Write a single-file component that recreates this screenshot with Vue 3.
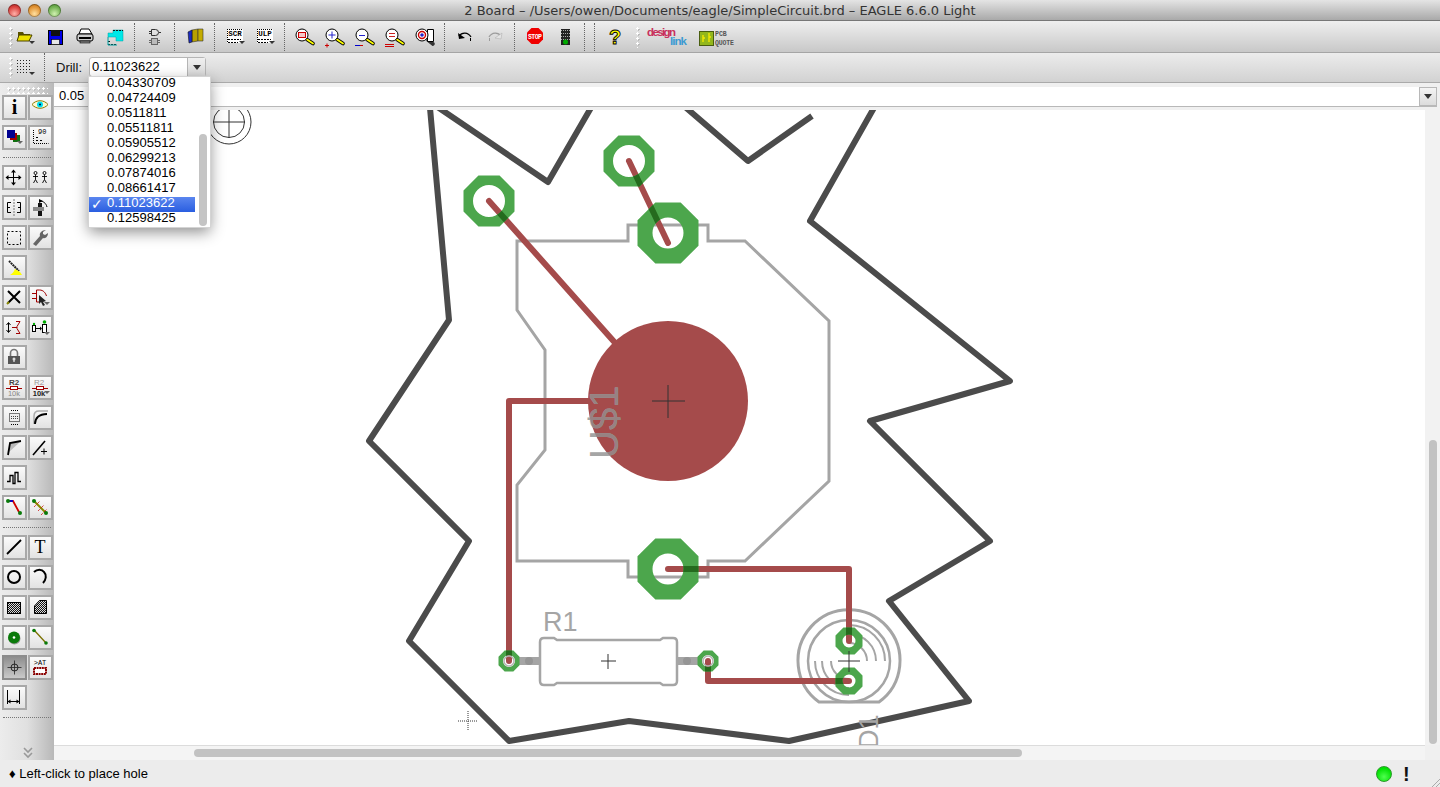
<template>
  <div class="window">
    <div class="titlebar">
      <div class="lights">
        <span class="light red"></span>
        <span class="light amber"></span>
        <span class="light green"></span>
      </div>
      <div class="title">2 Board – /Users/owen/Documents/eagle/SimpleCircuit.brd – EAGLE 6.6.0 Light</div>
    </div>

    <div class="toolbar top">
      <span class="handle"></span>
      <template v-for="(item, i) in topItems" :key="i">
        <span v-if="item === 'sep'" class="sep"></span>
        <span v-else-if="item === 'handle'" class="handle mid"></span>
        <svg
          v-else
          class="tool"
          :width="widths[item] || 30"
          height="24"
          :viewBox="`-3 0 ${widths[item] || 30} 24`"
          v-html="icons[item]"
        ></svg>
      </template>
    </div>

    <div class="toolbar second">
      <span class="handle"></span>
      <svg class="tool" width="30" height="24" viewBox="-3 0 30 24" v-html="icons.grid"></svg>
      <span class="sep drill-sep"></span>
      <span class="drill-label">Drill:</span>
      <div class="combo">
        <span class="combo-value">0.11023622</span>
        <span class="combo-btn"><i class="arrow"></i></span>
      </div>
    </div>

    <div class="main">
      <aside class="sidebar">
        <span class="hhandle"></span>
        <template v-for="(row, i) in sideRows" :key="i">
          <div v-if="row === 'sep'" class="side-sep"></div>
          <div v-else class="side-row">
            <div
              v-for="name in row"
              :key="name"
              :class="['side-btn', { active: name === 'hole' }]"
            >
              <svg width="21" height="21" viewBox="0 0 21 21" v-html="icons[name]"></svg>
            </div>
          </div>
        </template>
        <div class="chevron">
          <svg width="12" height="12" viewBox="0 0 12 12">
            <path d="M2 1l4 4 4-4M2 6l4 4 4-4" fill="none" stroke="#999" stroke-width="1.6" />
          </svg>
        </div>
      </aside>

      <div class="content">
        <div class="coord-row">
          <div class="coord">
            <span class="coord-text">0.05 inch (0.25 0.45)</span>
            <span class="coord-btn"><i class="arrow"></i></span>
          </div>
        </div>
        <div class="canvas-row">
          <svg class="board" width="1371" height="635" viewBox="54 110 1371 635">
            <defs>
              <clipPath id="pad-clip">
                <path :d="padPath" clip-rule="evenodd" />
              </clipPath>
              <clipPath id="smd-clip">
                <circle cx="668" cy="401" r="80" />
              </clipPath>
            </defs>

            <!-- origin hole -->
            <g fill="none" stroke="#333" stroke-width="1">
              <circle cx="229" cy="122" r="15.5" />
              <circle cx="229" cy="122" r="22" />
              <path d="M229 106v32M213 122h32" />
            </g>

            <!-- board outline -->
            <g fill="none" stroke="#4b4b4b" stroke-width="6" stroke-linejoin="round">
              <path d="M430 108L449 320 369 441 469 541 409 641 509 741 629 721 789 741 969 701 889 601 990 541 870 421 1010 381 810 221 875 106" />
              <path d="M436 106L548 182 592 106" />
              <path d="M684 106L748 161 812 116" />
            </g>

            <!-- packages -->
            <g fill="none" stroke="#a5a5a5" stroke-width="3">
              <path d="M517 241H628V225H708V241H745L829 321V481L745 561H708V577H628V561H517V485L545 450V350L517 310Z" />
              <path d="M544 638h10l3 2h103l3-2h10q4 0 4 4v39q0 4-4 4h-10l-3-2h-103l-3 2h-10q-4 0-4-4v-39q0-4 4-4z" stroke-width="2.5" />
              <path d="M819 702A51 51 0 1 1 879 702Z" />
              <circle cx="849" cy="661" r="41" stroke-width="2.5" />
              <g stroke-width="2">
                <path d="M849 643A18 18 0 0 1 867 661" />
                <path d="M849 634A27 27 0 0 1 876 661" />
                <path d="M849 625A36 36 0 0 1 885 661" />
                <path d="M849 679A18 18 0 0 1 831 661" />
                <path d="M849 688A27 27 0 0 1 822 661" />
                <path d="M849 695A34 34 0 0 1 815 661" />
              </g>
            </g>
            <path d="M517 661h23M677 661h23" stroke="#a5a5a5" stroke-width="8" />
            <circle cx="529" cy="661" r="4" fill="#959595" />
            <circle cx="687" cy="661" r="4" fill="#959595" />
            <text class="pkg-text" x="543" y="631" font-size="27">R1</text>
            <text class="pkg-text" transform="translate(878 749) rotate(-90)" font-size="27">D1</text>

            <!-- traces -->
            <circle cx="668" cy="401" r="80" fill="#a54b4b" />
            <path :d="wires" fill="none" stroke="#a54b4b" stroke-width="6" stroke-linecap="round" stroke-linejoin="round" />

            <!-- part name lies over the copper -->
            <text class="pkg-text" transform="translate(618 459) rotate(-90)" font-size="40">U$1</text>
            <g clip-path="url(#smd-clip)">
              <text class="pkg-text over" transform="translate(618 459) rotate(-90)" font-size="40">U$1</text>
            </g>

            <!-- pads -->
            <path :d="padPath" fill="#4ca64c" fill-rule="evenodd" />
            <path :d="wires" fill="none" stroke="#256b1e" stroke-width="6" clip-path="url(#pad-clip)" />
            <g fill="none" stroke="#b5b5b5" stroke-width="1.5">
              <circle cx="509" cy="661" r="5" />
              <circle cx="708" cy="661" r="5" />
            </g>

            <!-- origins -->
            <g stroke="#333" stroke-width="1" fill="none">
              <path d="M668 385v33M652 401h33" />
              <path d="M849 651v21M838 661h22" />
              <path d="M608 654v15M601 661h15" />
              <path d="M468 711v20M458 721h20" stroke-dasharray="1 1" />
            </g>
          </svg>
          <div class="vscroll"><div class="vthumb"></div></div>
        </div>
        <div class="hscroll"><div class="hthumb"></div></div>
      </div>
    </div>

    <div class="statusbar">
      <span class="status-text">♦ Left-click to place hole</span>
      <span class="status-right">
        <span class="led"></span>
        <span class="bang">!</span>
      </span>
      <span class="grip"></span>
    </div>

    <div class="dropdown">
      <div class="drop-list">
        <div
          v-for="val in drills"
          :key="val"
          :class="['drop-item', { selected: val === '0.11023622' }]"
        >
          <span v-if="val === '0.11023622'" class="tick">✓</span>{{ val }}
        </div>
      </div>
      <div class="drop-scroll"><div class="drop-thumb"></div></div>
    </div>
  </div>
</template>

<script setup>
const drills = [
  '0.04330709', '0.04724409', '0.0511811', '0.05511811', '0.05905512',
  '0.06299213', '0.07874016', '0.08661417', '0.11023622', '0.12598425'
]

const topItems = [
  'open', 'save', 'print', 'cam', 'sep', 'schem', 'sep', 'lib', 'sep', 'scr', 'ulp', 'sep',
  'zfit', 'zin', 'zout', 'zsel', 'zredraw', 'sep', 'undo', 'redo', 'sep', 'stop', 'traffic',
  'sep', 'sep', 'help', 'handle', 'design', 'pcb'
]

const widths = { design: 50, pcb: 44 }

const sideRows = [
  ['info', 'show'],
  ['layers', 'mark'],
  'sep',
  ['move', 'copy'],
  ['mirror', 'rotate'],
  ['group', 'change'],
  ['paste'],
  ['delete', 'add'],
  ['pinswap', 'replace'],
  ['lock'],
  ['name', 'value'],
  ['smash', 'miter'],
  ['split', 'optimize'],
  ['meander'],
  ['route', 'ripup'],
  'sep',
  ['wire', 'text'],
  ['circle', 'arc'],
  ['rect', 'polygon'],
  ['via', 'signal'],
  ['hole', 'attr'],
  ['dimension'],
  'sep'
]

// shared bits of the magnifier icons
const glass = (inner, handle = '#ff0') => `
  <path d="M14 14.5l6 4" stroke="#000" stroke-width="3.6" stroke-linecap="round"/>
  <path d="M14 14.5l6 4" stroke="${handle}" stroke-width="1.8" stroke-linecap="round"/>
  <circle cx="9" cy="10" r="6" fill="#fff" stroke="#000"/>${inner}`

const dash = (y, w) => `<path d="M5 ${y}h${w}" stroke="#000" stroke-dasharray="2 1"/>`

const script = label => `
  <rect x="4" y="4" width="16" height="14" fill="#fff"/>
  <text x="12" y="11" text-anchor="middle" font-size="7.5" font-weight="700" font-family="Liberation Mono, monospace">${label}</text>
  <path d="M4 4.5h15M4.5 4v14" stroke="#000" stroke-dasharray="1 1" fill="none"/>
  ${dash(14.5, 13)}${dash(17.5, 10)}
  <path d="M16 16h6l-3 3z" fill="#333"/>`

const checker = id => `<defs><pattern id="${id}" width="2" height="2" patternUnits="userSpaceOnUse">
  <rect width="2" height="2" fill="#ddd"/><rect width="1" height="1" fill="#111"/><rect x="1" y="1" width="1" height="1" fill="#111"/>
</pattern></defs>`

const icons = {
  open: `<path d="M5 7h5l1 2h6v7H5z" fill="#5a5200"/>
    <path d="M6 10h13l-3 6H4z" fill="#ece000" stroke="#4a4200" stroke-width="1"/>
    <path d="M16 16h6l-3 3z" fill="#333"/>`,
  save: `<rect x="5.5" y="5.5" width="14" height="14" fill="#0000e8" stroke="#000"/>
    <rect x="8" y="5" width="9" height="6" fill="#111"/>
    <rect x="8.5" y="14.5" width="8" height="5" fill="#e8e8e8" stroke="#000" stroke-width=".6"/>`,
  print: `<path d="M8 4h8l3 5H6z" fill="#fff" stroke="#000"/>
    <rect x="4" y="9" width="16" height="7" rx="2" fill="#ccc" stroke="#000"/>
    <path d="M6 13h12" stroke="#000" stroke-width="2"/>
    <rect x="7" y="16" width="10" height="2" fill="#888" stroke="#000" stroke-width=".6"/>`,
  cam: `<path d="M10 5h10v11h-7v-4H5V8h5z" fill="#00e8e8" stroke="#00a0a0" stroke-width=".5"/>
    <path d="M10 5.5h10M5 19.5h9M5 16.5h3" stroke="#111" stroke-width="1" stroke-dasharray="2 1"/>
    <path d="M5 12v8h9" fill="none" stroke="#00a0a0"/>`,
  schem: `<path d="M8.5 4.5h4a3 3 0 0 1 0 6h-4zM6 6.5h2M6 8.5h2M16 7.5h2" fill="none" stroke="#333"/>
    <rect x="8.5" y="13.5" width="6" height="6" fill="#bbb" stroke="#666"/>
    <path d="M6 15.5h2M6 17.5h2M15 15.5h2M15 17.5h2" stroke="#666"/>`,
  lib: `<path d="M9 5l6-1v12l-6 1z" fill="#b8a000" stroke="#333" stroke-width=".6"/>
    <path d="M15 4h5v12h-5z" fill="#c4ac00" stroke="#333" stroke-width=".6"/>
    <path d="M5 7l4-2v12l-3 1z" fill="#1c2cc0" stroke="#111" stroke-width=".6"/>`,
  scr: script('SCR'),
  ulp: script('ULP'),
  zfit: glass('<rect x="5.5" y="7.5" width="7" height="5" fill="#f4c8c8" stroke="#c00"/>'),
  zin: glass('<path d="M9 6.5v7M5.5 10h7" stroke="#22c"/><path d="M2 20.5h4M4 18.5v4" stroke="#c00"/>'),
  zout: glass('<path d="M6 10.5h6" stroke="#22c"/><path d="M2 20.5h5" stroke="#00c"/><path d="M7 20.5h3" stroke="#c00"/>'),
  zsel: glass('<path d="M6 8.5h6M6 11.5h6" stroke="#c22"/><path d="M2 19.5h9M2 21.5h9" stroke="#c00"/>'),
  zredraw: `<path d="M15 15l5 4" stroke="#333" stroke-width="3.6" stroke-linecap="round"/>
    <path d="M14.5 4.5h6v12h-6z" fill="#fff" stroke="#000"/>
    <circle cx="9" cy="10" r="6" fill="#fff" stroke="#000"/>
    <circle cx="9" cy="10" r="3.5" fill="#fff" stroke="#c00" stroke-width="1.4"/>
    <circle cx="9" cy="10" r="1.8" fill="#22c"/>`,
  undo: `<path d="M6 11c3-4 9-4 12 1" fill="none" stroke="#000" stroke-width="1.3"/>
    <path d="M17.5 13v3" stroke="#000"/><path d="M5 8l1 6 6-1z" fill="#000"/>`,
  redo: `<path d="M18 11c-3-4-9-4-12 1" fill="none" stroke="#9c9c9c" stroke-width="1.3"/>
    <path d="M6.5 13v3" stroke="#9c9c9c"/><path d="M19 8l-1 6-6-1z" fill="#e4e4e4" stroke="#aaa" stroke-width=".5"/>`,
  stop: `<path d="M8.500 3h7l4.500 4.500v7l-4.500 4.500h-7l-4.500-4.500v-7z" fill="#f00000"/>
    <text x="12" y="13.500" text-anchor="middle" fill="#fff" font-size="6.500" font-weight="700" font-family="Liberation Mono, monospace" textLength="14">STOP</text>`,
  traffic: `<rect x="8" y="4" width="9" height="16" fill="#222"/>
    <path d="M8 5.500h9M8 8.500h9M8 11.500h9M8 14.500h9" stroke="#aaa" stroke-dasharray="1 1"/>
    <circle cx="12.500" cy="17" r="2.500" fill="#0a0"/>`,
  help: `<text x="12" y="19" text-anchor="middle" font-size="20" font-weight="700" fill="#ff0" stroke="#000" stroke-width=".9" font-family="Liberation Sans, sans-serif">?</text>`,
  design: `<text x="0" y="11" font-size="11.5" font-weight="700" fill="#c8305c" font-family="Liberation Sans, sans-serif" textLength="29">design</text>
    <text x="23" y="20" font-size="11.5" fill="#3b9ad2" font-weight="700" font-family="Liberation Sans, sans-serif" textLength="17">link</text>`,
  pcb: `<rect x="2.500" y="6.500" width="14" height="14" fill="#93b71c" stroke="#4a5e10"/>
    <path d="M6 10v7M12 8v9M6 13h2M12 12h2" stroke="#f2e800" stroke-width="1.400"/>
    <text x="18" y="11" font-size="6.500" fill="#555" font-weight="700" font-family="Liberation Mono, monospace">PCB</text>
    <text x="18" y="20" font-size="6.500" fill="#555" font-weight="700" font-family="Liberation Mono, monospace" textLength="19">QUOTE</text>`,
  grid: `<path d="M4 5.500h15M4 8.500h15M4 11.500h15M4 14.500h15M4 17.500h11" fill="none" stroke="#222" stroke-dasharray="1 2"/>
    <path d="M16 17h6l-3 3z" fill="#333"/>`,

  info: `<text x="10.500" y="17" text-anchor="middle" font-size="20" font-weight="700" fill="#000" font-family="Liberation Serif, serif">i</text>`,
  show: `<path d="M2 7.500c4-5 12-5 16 0-4 5-12 5-16 0z" fill="#fff8d0" stroke="#8a7a00"/>
    <circle cx="10" cy="7.500" r="3" fill="#00e0f0"/><circle cx="10" cy="7.500" r="1" fill="#003"/>`,
  layers: `<rect x="9" y="8" width="7" height="7" fill="#107010"/>
    <rect x="6" y="6" width="7" height="7" fill="#a00000"/>
    <rect x="3" y="3" width="8" height="8" fill="#000090"/>
    <path d="M13 14h6l-3 3z" fill="#666"/>`,
  mark: `<path d="M3.500 3v13.500h15" fill="none" stroke="#000" stroke-dasharray="1 1"/>
    <path d="M6 13.500h2M10 13.500h2M6 10.500h2" stroke="#000"/>
    <text x="8" y="7" font-size="7" font-family="Liberation Mono, monospace">90</text>`,
  move: `<path d="M9.500 4v13M3 10.500h13" stroke="#000"/>
    <path d="M9.500 2.500l-2.500 3h5zM9.500 18.500l-2.500-3h5zM1.500 10.500l3-2.500v5zM17.500 10.500l-3-2.500v5z" fill="#000"/>`,
  copy: `<g fill="none" stroke="#000" stroke-width=".9"><circle cx="5.500" cy="6" r="1.500"/><path d="M5.500 7.500v5M3 9.500h5M5.500 12.500l-2 3.500M5.500 12.500l2 3.500"/>
    <circle cx="14.500" cy="6" r="1.500"/><path d="M14.500 7.500v5M12 9.500h5M14.500 12.500l-2 3.500M14.500 12.500l2 3.500"/></g>`,
  mirror: `<path d="M7 5.500H3.500v10H7M3.500 10.500H6M13 5.500h3.500v10H13M16.500 10.500H14" fill="none" stroke="#000"/>
    <path d="M10 2v17" stroke="#777" stroke-dasharray="2 1"/>`,
  rotate: `<rect x="8" y="6" width="4" height="13" fill="#111"/>
    <rect x="3" y="10" width="11" height="4" fill="#888"/>
    <path d="M10 4c3 0 6 2 7 6" fill="none" stroke="#000"/><path d="M9 2l4 2-4 2z" fill="#000"/>`,
  group: `<rect x="3.500" y="4.500" width="13" height="13" fill="none" stroke="#000" stroke-dasharray="2 2"/>`,
  change: `<path d="M16 3l-3 2v2l2 1 3-2c0 3-2 6-5 5l-7 8-3-2 7-8c-1-3 2-6 6-6z" fill="#666"/>`,
  paste: `<path d="M5 4l10 10" stroke="#222" stroke-width="2" stroke-dasharray="2 .6"/>
    <path d="M11 12l5 3 2 3H6c2-1 4-3 5-6z" fill="#ff0"/>`,
  delete: `<path d="M4 4l12 12M16 4L4 16" stroke="#000" stroke-width="2"/>
    <path d="M3 17l2-2" stroke="#880" stroke-width="2"/>`,
  add: `<path d="M6.500 3h3c4 0 6 3 7 6M6.500 3v12h3M2 6.500h4M2 11.500h4" fill="none" stroke="#a00000"/>
    <path d="M9 8l7 6-3 1 2 3-2 1-2-4-2 2z" fill="#222"/><path d="M14 15h6l-3 3z" fill="#666"/>`,
  pinswap: `<path d="M4.500 6v9M2.500 8l2-2.500 2 2.500M2.500 13l2 2.500 2-2.500" fill="none" stroke="#000"/>
    <path d="M12 4.500h4l-3 5v2l3 5h-4" fill="none" stroke="#a00000"/><path d="M8 10.500h5" stroke="#a00000"/>`,
  replace: `<rect x="2.500" y="8.500" width="3" height="6" fill="#fff" stroke="#000"/><rect x="12.500" y="7.500" width="4" height="8" fill="#fff" stroke="#000"/>
    <path d="M6 11.500h5" stroke="#000"/><path d="M10 9.500v4l2-2z" fill="#000"/>
    <circle cx="14.500" cy="5" r="1.800" fill="#0a0"/><circle cx="4" cy="7" r="1.200" fill="#0a0"/>
    <path d="M14 15h6l-3 3z" fill="#666"/>`,
  lock: `<path d="M6.500 9V6a3.500 3.500 0 0 1 7 0v3" fill="none" stroke="#777" stroke-width="1.600"/>
    <rect x="4" y="9" width="12" height="8" fill="#555"/><circle cx="10" cy="12" r="1.500" fill="#ddd"/><path d="M10 12v3" stroke="#ddd" stroke-width="1.300"/>`,
  name: `<text x="10" y="8" text-anchor="middle" font-size="8" font-weight="700" font-family="Liberation Sans, sans-serif" fill="#444">R2</text>
    <path d="M2 11.500h16" stroke="#a00000"/><rect x="6.500" y="9.500" width="7" height="3" fill="#fff" stroke="#a00000"/>
    <text x="10" y="18.500" text-anchor="middle" font-size="7.500" font-family="Liberation Sans, sans-serif" fill="#888">10k</text>`,
  value: `<text x="9" y="8" text-anchor="middle" font-size="8" font-family="Liberation Sans, sans-serif" fill="#999">R2</text>
    <path d="M2 11.500h16" stroke="#a00000"/><rect x="6.500" y="9.500" width="7" height="3" fill="#fff" stroke="#a00000"/>
    <text x="9" y="18.500" text-anchor="middle" font-size="7.500" font-weight="700" font-family="Liberation Sans, sans-serif" fill="#222">10k</text>
    <path d="M14 14h6l-3 3z" fill="#666"/>`,
  smash: `<rect x="5.500" y="6.500" width="10" height="8" fill="#eee" stroke="#000" stroke-dasharray="1 1"/>
    <path d="M7 3.500h7M7 17.500h7" stroke="#000" stroke-dasharray="1 1"/>
    <path d="M7 9.500h7M7 11.500h7" stroke="#444" stroke-dasharray="1 1"/>`,
  miter: `<path d="M4 17V9c0-3 2-5 5-5h9" fill="none" stroke="#aaa" stroke-width="1.500"/>
    <path d="M5 17c0-6 4-10 12-10" fill="none" stroke="#000" stroke-width="1.800"/>`,
  split: `<path d="M5 5h11L5 15z" fill="#bbb"/><path d="M4 18L6 6l11-2" fill="none" stroke="#000" stroke-width="1.800"/>`,
  optimize: `<path d="M3 18L15 4" stroke="#000" stroke-width="1.600"/><path d="M11 14.500h6M14 11.500v6" stroke="#000"/>`,
  meander: `<path d="M3 14.500h3V8.500h3v8h2V5.500h3v9h3" fill="none" stroke="#000" stroke-width="1.300"/>`,
  route: `<path d="M4 4h5l6 11" fill="none" stroke="#d00000" stroke-width="1.800"/><path d="M4 4h5" stroke="#0000d0" stroke-width="1.800"/>
    <circle cx="4" cy="4" r="2" fill="#0a7a0a"/><circle cx="16" cy="16" r="2" fill="#0a7a0a"/>`,
  ripup: `<path d="M4 4l12 12" stroke="#8a8a00" stroke-width="2"/><path d="M4 10l6-6M8 14l6-6M11 18l6-6" stroke="#c00" stroke-dasharray="1 1"/>
    <circle cx="4" cy="4" r="2" fill="#0a7a0a"/><circle cx="16" cy="16" r="2" fill="#0a7a0a"/>`,
  wire: `<path d="M3 17L17 3" stroke="#000" stroke-width="1.800"/>`,
  text: `<text x="10" y="16" text-anchor="middle" font-size="18" font-family="Liberation Serif, serif" fill="#000">T</text>`,
  circle: `<circle cx="10" cy="10" r="6" fill="none" stroke="#000" stroke-width="2"/>`,
  arc: `<path d="M4 5c3-3 8-3 10 0 3 3 2 8-1 11" fill="none" stroke="#000" stroke-width="2"/>`,
  rect: `${checker('chk-a')}<rect x="3.500" y="5.500" width="13" height="11" fill="url(#chk-a)" stroke="#000"/>`,
  polygon: `${checker('chk-b')}<path d="M4.500 16.500V9l5-5.500h7v13z" fill="url(#chk-b)" stroke="#000"/>`,
  via: `<circle cx="10.500" cy="11.500" r="6" fill="#999"/><circle cx="10" cy="10.500" r="6" fill="#0a7a0a"/><circle cx="10" cy="10.500" r="1.300" fill="#fff"/>`,
  signal: `<path d="M4 3l12 13" stroke="#7a7000" stroke-width="1.300"/><circle cx="4" cy="3.500" r="1.800" fill="#0a7a0a"/><circle cx="16" cy="16" r="1.800" fill="#0a7a0a"/>`,
  hole: `<circle cx="10.500" cy="10.500" r="3.500" fill="none" stroke="#222"/><path d="M10.500 3.500v14M3.500 10.500h14" stroke="#222" stroke-width=".8"/>`,
  attr: `<text x="10" y="8" text-anchor="middle" font-size="7" font-family="Liberation Mono, monospace" fill="#000">&gt;AT</text>
    <rect x="4" y="11" width="12" height="6" fill="#fff" stroke="#8a0000" stroke-width="2" stroke-dasharray="2 .6"/>`,
  dimension: `<path d="M3.500 3v14M15.500 3v14M3.500 14.500h12" fill="none" stroke="#000"/><path d="M3.500 14.500l3-2v4zM15.500 14.500l-3-2v4z" fill="#000"/>`
}

// pads as [x, y, outer, hole]
const pads = [
  [489, 201, 25.5, 16],
  [629, 161, 25.5, 16],
  [668, 233, 30.5, 15.5],
  [668, 569, 30.5, 15.5],
  [509, 661, 10.5, 6],
  [708, 661, 10.5, 6],
  [849, 641, 13.5, 6.5],
  [849, 681, 13.5, 6.5]
]

const octagon = (x, y, r) => {
  const s = r * 0.414
  return `M${x - s} ${y - r}H${x + s}L${x + r} ${y - s}V${y + s}L${x + s} ${y + r}H${x - s}L${x - r} ${y + s}V${y - s}Z`
}

const hole = (x, y, r) => `M${x - r} ${y}a${r} ${r} 0 1 0 ${r * 2} 0a${r} ${r} 0 1 0 ${-r * 2} 0Z`

const padPath = pads.map(([x, y, r, h]) => octagon(x, y, r) + hole(x, y, h)).join('')

const wires = 'M489 201L617 345M629 161L668 243M668 401H509V661M668 569H849V641M708 661V681H849'
</script>

<style>
html, body {
  margin: 0;
  overflow: hidden;
  background: #ececec;
}
</style>

<style scoped>
.window {
  position: relative;
  width: 1440px;
  height: 787px;
  display: flex;
  flex-direction: column;
  overflow: hidden;
  background: #ececec;
  font-family: "Liberation Sans", Arial, sans-serif;
  font-size: 13px;
  color: #000;
}

.titlebar {
  height: 21px;
  flex: none;
  display: flex;
  align-items: center;
  background: linear-gradient(#e4e4e4, #a9a9a9);
  border-bottom: 1px solid #777;
  box-sizing: border-box;
}

.lights {
  display: flex;
  gap: 7px;
  width: 60px;
  padding-left: 8px;
  box-sizing: border-box;
}

.light {
  flex: none;
  width: 13px;
  height: 13px;
  border-radius: 50%;
  box-shadow: inset 0 0 0 1px rgba(0, 0, 0, 0.3);
}

.light.red { background: radial-gradient(circle at 50% 75%, #ffb0a8, #d8403c 60%, #a02020); }
.light.amber { background: radial-gradient(circle at 50% 75%, #ffe0a0, #e09030 60%, #b06a18); }
.light.green { background: radial-gradient(circle at 50% 75%, #d0f0b0, #70b050 60%, #4a8a30); }

.title {
  flex: 1;
  text-align: center;
  padding-right: 60px;
  font-family: "DejaVu Sans", sans-serif;
  font-size: 13px;
  color: #333;
  white-space: nowrap;
}

.toolbar {
  flex: none;
  display: flex;
  align-items: center;
  box-sizing: border-box;
  padding-left: 8px;
}

.toolbar.top {
  height: 32px;
  padding-top: 1px;
  background: linear-gradient(#efefef, #c8c8c8);
  border-bottom: 1px solid #a5a5a5;
}

.toolbar.second {
  height: 30px;
  padding-bottom: 1px;
  background: linear-gradient(#ececec, #d2d2d2);
  border-bottom: 1px solid #aaa;
}

.handle {
  flex: none;
  width: 5px;
  height: 22px;
  margin-right: -3px;
  background-image:
    radial-gradient(circle, #fff 1px, transparent 1.3px),
    radial-gradient(circle, #bbb 1px, transparent 1.3px);
  background-size: 5px 5px;
  background-position: 0 0, 1px 1px;
}

.handle.mid {
  margin: 0 4px 0 5px;
}

.tool {
  flex: none;
  display: block;
}

.sep {
  flex: none;
  width: 0;
  height: 28px;
  margin: 0 5px 0 4px;
  border-left: 1px dotted #666;
}

.drill-sep {
  margin: 0 11px 0 4px;
}

.drill-label {
  width: 33px;
  color: #111;
}

.combo {
  width: 117px;
  height: 20px;
  box-sizing: border-box;
  display: flex;
  background: #fff;
  border: 1px solid #b5b5b5;
  border-radius: 3px;
  line-height: 17px;
}

.combo-value {
  flex: 1;
  padding-left: 2px;
}

.combo-btn {
  width: 17px;
  display: flex;
  align-items: center;
  justify-content: center;
  background: linear-gradient(#f0f0f0, #d8d8d8);
  border-left: 1px solid #b5b5b5;
}

.arrow {
  display: block;
  width: 0;
  height: 0;
  border-left: 4px solid transparent;
  border-right: 4px solid transparent;
  border-top: 5px solid #333;
}

.main {
  flex: 1;
  min-height: 0;
  display: flex;
}

.sidebar {
  flex: none;
  width: 54px;
  box-sizing: border-box;
  padding: 12px 2px 0;
  position: relative;
  display: flex;
  flex-direction: column;
  background: linear-gradient(90deg, #ececec 0, #e0e0e0 50%, #b8b8b8 100%);
}

.hhandle {
  position: absolute;
  left: 6px;
  top: 3px;
  width: 42px;
  height: 8px;
  background-image:
    radial-gradient(circle, #fff 1px, transparent 1.3px),
    radial-gradient(circle, #c0c0c0 1px, transparent 1.3px);
  background-size: 5px 5px;
  background-position: 0 0, 1px 1px;
}

.side-row {
  display: flex;
  gap: 1px;
  height: 25px;
  margin-bottom: 5px;
}

.side-btn {
  width: 25px;
  height: 25px;
  box-sizing: border-box;
  border: 2px solid #a8a8a8;
  background: linear-gradient(#fbfbfb, #e2e2e2);
}

.side-btn svg {
  display: block;
}

.side-btn.active {
  background: linear-gradient(#8e8e8e, #c9c9c9);
  border-color: #8c8c8c;
}

.side-sep {
  height: 8px;
  margin: 2px 1px 0;
  border-top: 1px dotted #777;
  box-sizing: border-box;
}

.chevron {
  margin-top: 22px;
  padding-left: 20px;
}

.chevron svg {
  display: block;
}

.content {
  flex: 1;
  min-width: 0;
  display: flex;
  flex-direction: column;
  background: #f0f0f0;
}

.coord-row {
  height: 27px;
  flex: none;
  box-sizing: border-box;
  padding: 4px 3px 0 0;
}

.coord {
  height: 20px;
  box-sizing: border-box;
  display: flex;
  background: #fff;
  border-bottom: 1px solid #b8b8b8;
  line-height: 17px;
}

.coord-text {
  flex: 1;
  padding-left: 5px;
}

.coord-btn {
  width: 18px;
  display: flex;
  align-items: center;
  justify-content: center;
  background: linear-gradient(#f4f4f4, #dcdcdc);
  border: 1px solid #b8b8b8;
  box-sizing: border-box;
}

.canvas-row {
  display: flex;
  height: 635px;
  flex: none;
}

.board {
  flex: none;
  display: block;
  background: #fff;
}

.pkg-text {
  fill: #a5a5a5;
  font-family: "Liberation Sans", Arial, sans-serif;
}

.pkg-text.over {
  fill: #978282;
}

.vscroll {
  flex: 1;
  box-sizing: border-box;
  padding: 330px 3px 1px 4px;
  background: #f2f2f2;
}

.vthumb {
  height: 304px;
  border-radius: 4px;
  background: #c2c2c2;
}

.hscroll {
  flex: none;
  width: 1371px;
  height: 15px;
  box-sizing: border-box;
  padding: 3px 0 0 140px;
  border-top: 1px solid #dcdcdc;
  background: #f4f4f4;
}

.hthumb {
  width: 828px;
  height: 8px;
  border-radius: 4px;
  background: #c2c2c2;
}

.statusbar {
  flex: none;
  height: 27px;
  display: flex;
  align-items: center;
  padding-left: 9px;
  position: relative;
  background: #ececec;
}

.status-text {
  flex: 1;
}

.status-right {
  display: flex;
  align-items: center;
  gap: 11px;
  padding-right: 31px;
}

.led {
  width: 16px;
  height: 16px;
  border-radius: 50%;
  box-sizing: border-box;
  border: 1px solid #2a9a2a;
  background: radial-gradient(circle at 50% 70%, #50ff50, #00e000 70%);
}

.bang {
  font-size: 20px;
  font-weight: 700;
  line-height: 20px;
  width: 6px;
  color: #111;
}

.grip {
  position: absolute;
  right: 0;
  bottom: 0;
  width: 10px;
  height: 10px;
  background: repeating-linear-gradient(135deg, transparent 0 2px, #aaa 2px 3px);
  clip-path: polygon(100% 0, 100% 100%, 0 100%);
}

.dropdown {
  position: absolute;
  left: 89px;
  top: 77px;
  width: 121px;
  height: 150px;
  display: flex;
  background: #fff;
  box-shadow: 0 5px 14px rgba(0, 0, 0, 0.45);
  outline: 1px solid #d4d4d4;
}

.drop-list {
  width: 106px;
  flex: none;
}

.drop-item {
  position: relative;
  height: 15px;
  line-height: 12px;
  padding-left: 18px;
}

.drop-item.selected {
  background: linear-gradient(#5a86ef, #2a5ee0);
  color: #fff;
}

.tick {
  position: absolute;
  left: 2px;
  top: 1px;
  font-family: "DejaVu Sans", sans-serif;
  font-size: 14px;
  font-weight: 700;
}

.drop-scroll {
  flex: 1;
  box-sizing: border-box;
  padding: 57px 3px 0 4px;
}

.drop-thumb {
  height: 92px;
  border-radius: 4px;
  background: #c4c4c4;
}
</style>
